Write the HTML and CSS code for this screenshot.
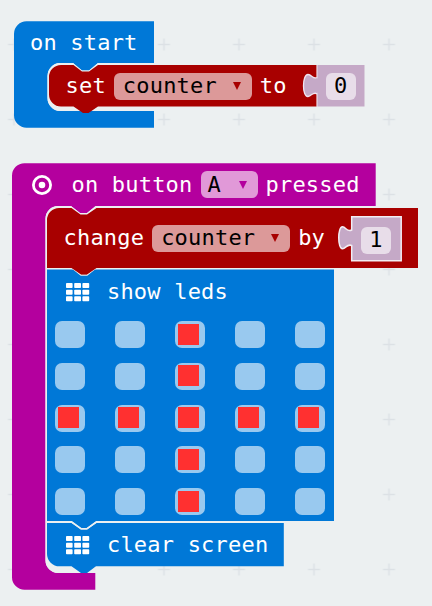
FILE: index.html
```html
<!DOCTYPE html>
<html lang="en">
<head>
<meta charset="utf-8">
<title>Block editor</title>
<link rel="stylesheet" href="styles.css">
</head>
<body>
<main class="workspace">
  <svg class="backdrop" width="432" height="606" aria-hidden="true">
    <defs>
      <pattern id="grid" x="-23.5" y="7" width="75" height="75" patternUnits="userSpaceOnUse">
        <path d="M31.5 37.4h12M37.5 31.4v12" stroke="#dce1e5" stroke-width="1.5"/>
      </pattern>
      <symbol id="leds" viewBox="0 0 24 19">
        <g fill="#fff">
          <rect x="0" y="0" width="6.6" height="5" rx=".8"/><rect x="8.2" y="0" width="6.8" height="5" rx=".8"/><rect x="16.4" y="0" width="6.8" height="5" rx=".8"/>
          <rect x="0" y="6.8" width="6.6" height="5" rx=".8"/><rect x="8.2" y="6.8" width="6.8" height="5" rx=".8"/><rect x="16.4" y="6.8" width="6.8" height="5" rx=".8"/>
          <rect x="0" y="13.2" width="6.6" height="5" rx=".8"/><rect x="8.2" y="13.2" width="6.8" height="5" rx=".8"/><rect x="16.4" y="13.2" width="6.8" height="5" rx=".8"/>
        </g>
      </symbol>
    </defs>
    <rect width="432" height="606" fill="url(#grid)"/>
  </svg>

  <section class="stack start">
    <svg class="shape" width="352" height="108" viewBox="14 21 352 108" aria-hidden="true">
      <path fill="#0078d7" d="M26.500 21.300H154V63H98L89 70.500H82L73 63H60A13 13 0 0 0 47.500 76V98A13 13 0 0 0 60 111H154V127.700H26.500A12.500 12.500 0 0 1 14 115.200V33.800A12.500 12.500 0 0 1 26.500 21.300Z"/>
      <path class="gap" d="M154 63H98L89 70.500H82L73 63H60A13 13 0 0 0 47.500 76V98A13 13 0 0 0 60 111H154Z"/>
      <path fill="#a80000" d="M61 65H73.500L82 71.500H89L98 65H316.500V106.500H98L88.500 113H83L73.500 106.500H61A12 12 0 0 1 49 94.500V77A12 12 0 0 1 61 65Z"/>
      <path class="value" stroke="#f0e4f0" stroke-width="1.300" d="M317.500 65V77.500C313 80 312 74.500 308 74.500C302 74.500 302 97 308 96.500C312 96 313 91 317.500 94V106.500"/>
      <path class="value" d="M317.500 65H364.500V106.500H317.500Z"/>
      <path class="value" d="M316 78.500H319V92.500H316Z"/>
    </svg>
    <div class="row start-title"><span>on start</span></div>
    <div class="row set-row">
      <span>set</span>
      <span class="field variable">counter<i class="arrow"></i></span>
      <span>to</span>
      <span class="field number zero">0</span>
    </div>
  </section>

  <section class="stack event">
    <svg class="shape" width="407" height="428" viewBox="12 163 407 428" aria-hidden="true">
      <path fill="#b4009e" d="M24.500 163.200H375.700V206H95.500L87 213H80L71 206H58A12.500 12.500 0 0 0 45.500 218.500V560.500A12.500 12.500 0 0 0 58 573H95.300V589.700H24.500A12.500 12.500 0 0 1 12 577.200V175.700A12.500 12.500 0 0 1 24.500 163.200Z"/>
      <path class="gap" d="M418 206.500H95.500L87 213H80L71 206H58A12.500 12.500 0 0 0 45.500 218.500V560.500A12.500 12.500 0 0 0 58 573H95.300V566H284V521H334V268H418Z"/>
      <path fill="#0078d7" d="M47 269.500H334V521H96.500L87 528H81L71.500 521H47Z"/>
      <path fill="#a80000" stroke="#ecf0f1" stroke-width="1.500" d="M47 267.500H71.500L81 275H87L96.500 267.500"/>
      <path fill="#a80000" d="M59 208H71.500L80.500 214.500H87L96.500 208H418V268H96.500L87 274.500H81L71.500 268H47V220A12 12 0 0 1 59 208Z"/>
      <path fill="#0078d7" d="M47 523H71.500L81 529.500H87L96.500 523H283.800V566.300H96L87 573H81L71.500 566.300H59.500A12.500 12.500 0 0 1 47 553.800Z"/>
      <path fill="none" stroke="#ecf0f1" stroke-width="1.500" d="M47 521.800H71.500L81 528.700H87L96.500 521.800H334"/>
      <path class="value" stroke="#f2edf3" stroke-width="1.500" d="M351.700 216.800H401.200V260.800H351.700V245.500C347 243.500 346 248.500 342.500 248.800C337.500 249 337.500 226.500 342.500 226.800C346 227 347 232.500 351.700 230Z"/>
    </svg>
    <div class="row event-title">
      <svg class="target" width="20" height="20" viewBox="0 0 20 20" aria-hidden="true">
        <circle cx="10" cy="10" r="8.600" fill="none" stroke="#fff" stroke-width="2.800"/>
        <circle cx="10" cy="10" r="3.300" fill="#fff"/>
      </svg>
      <span>on button</span>
      <span class="field button">A<i class="arrow"></i></span>
      <span>pressed</span>
    </div>
    <div class="row change-row">
      <span>change</span>
      <span class="field variable">counter<i class="arrow"></i></span>
      <span>by</span>
      <span class="field number one">1</span>
    </div>
    <div class="row show-row">
      <svg width="24" height="19"><use href="#leds"/></svg>
      <span>show leds</span>
    </div>
    <div class="matrix">
      <b></b><b></b><b class="on"></b><b></b><b></b>
      <b></b><b></b><b class="on"></b><b></b><b></b>
      <b class="on"></b><b class="on"></b><b class="on"></b><b class="on"></b><b class="on"></b>
      <b></b><b></b><b class="on"></b><b></b><b></b>
      <b></b><b></b><b class="on"></b><b></b><b></b>
    </div>
    <div class="row clear-row">
      <svg width="24" height="19"><use href="#leds"/></svg>
      <span>clear screen</span>
    </div>
  </section>
</main>
</body>
</html>
```
FILE: styles.css
```css
* { box-sizing: border-box; }

body {
  margin: 0;
  background: #ecf0f1;
  color: #fff;
  font: 22px/26px "DejaVu Sans Mono", monospace;
  letter-spacing: 0.2px;
}

.workspace {
  position: relative;
  width: 432px;
  height: 606px;
  overflow: hidden;
}

.backdrop,
.shape {
  position: absolute;
  top: 0;
  left: 0;
}

.gap { fill: #ecf0f1; }
.value { fill: #c5a9c7; }

/* Block stacks are placed freely on the workspace canvas. */
.stack { position: absolute; }
.start { left: 14px; top: 21px; width: 352px; height: 108px; }
.event { left: 12px; top: 163px; width: 407px; height: 428px; }

.row {
  position: relative;
  display: flex;
  align-items: center;
  white-space: pre;
}

.row svg { flex: none; }

.start-title { height: 43px; padding-left: 16px; }
.set-row { height: 44px; padding-left: 51.5px; }
.event-title { height: 43px; padding-left: 20px; }
.change-row { height: 62px; padding: 0 0 2px 51.5px; margin-top: 2px; }
.show-row { height: 44px; padding-left: 53.6px; gap: 17.4px; }
.clear-row { height: 46px; padding-left: 53.6px; gap: 17.4px; }

.field {
  display: flex;
  align-items: center;
  flex: none;
  height: 27px;
  border-radius: 6px;
  color: #000;
}

.variable {
  width: 138px;
  margin: 0 8px;
  padding-left: 9px;
  background: #dc9999;
}

.button {
  width: 57px;
  margin: 0 8px;
  padding-left: 7px;
  background: #e199d8;
}

.event-title .target { margin-right: 19.5px; }

.number {
  width: 30px;
  justify-content: center;
  background: #e8dde9;
}

.zero { margin-left: 39px; }

.one { margin: 4px 0 0 36px; }

.arrow {
  margin-left: auto;
  margin-right: 11px;
  border: 4px solid transparent;
  border-top: 8px solid #a80000;
  border-bottom: 0;
}

.button .arrow { border-top-color: #b4009e; }

.matrix {
  position: relative;
  display: grid;
  grid-template-columns: repeat(5, 30px);
  grid-auto-rows: 27px;
  gap: 14.75px 30px;
  padding: 7px 0 7px 43.3px;
}

.matrix b {
  padding: 2.7px 0 0 3px;
  border-radius: 7px;
  background: #99c9ef;
}

.matrix .on::before {
  content: "";
  display: block;
  width: 21px;
  height: 21px;
  background: #ff3030;
}
```
